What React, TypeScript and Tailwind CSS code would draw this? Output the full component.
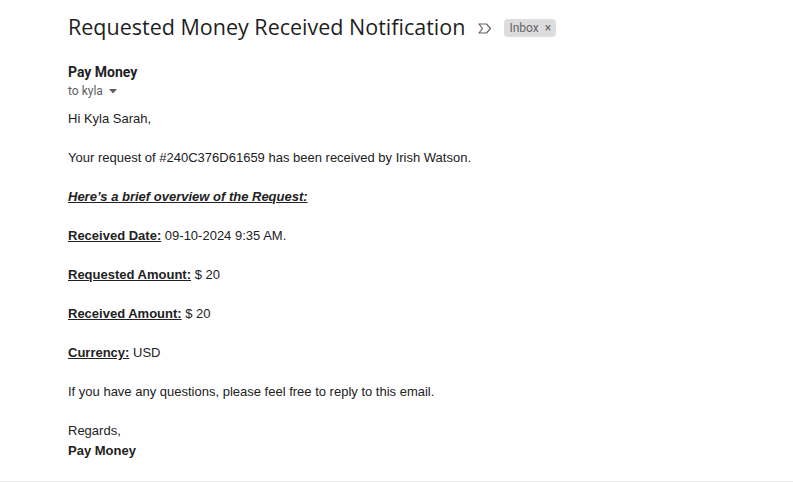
import React from 'react';

const rows = [
  { label: 'Received Date:', value: '09-10-2024 9:35 AM.' },
  { label: 'Requested Amount:', value: '$ 20' },
  { label: 'Received Amount:', value: '$ 20' },
  { label: 'Currency:', value: 'USD' },
];

const ImportantMarker = () => (
  <svg width="14" height="11" viewBox="0 0 14 11" className="block">
    <path
      d="M1 1 H8.5 L12.5 5.5 L8.5 10 H1 L4.5 5.5 Z"
      fill="none"
      stroke="#5f6368"
      strokeWidth="1.2"
      strokeLinejoin="round"
    />
  </svg>
);

const App = () => {
  return (
    <div className="w-[793px] h-[482px] bg-white border-b border-[#e8e8e8] overflow-hidden">
      <div className="pl-[68px] pt-[12px]">
        <div className="flex items-center h-[30px]">
          <h1
            className="text-[21.5px] leading-[30px] text-[#1f1f1f] font-normal"
            style={{ fontFamily: '"Open Sans", Roboto, sans-serif' }}
          >
            Requested Money Received Notification
          </h1>
          <div className="ml-[13px] mt-[2px]">
            <ImportantMarker />
          </div>
          <span
            className="ml-[12px] mt-[2px] flex items-center h-[18px] px-[5px] rounded-[4px] bg-[#dddddd] text-[12px] text-[#666666]"
            style={{ fontFamily: 'Roboto, Arial, sans-serif' }}
          >
            Inbox
            <span className="ml-[6px] text-[12px] text-[#666666]">×</span>
          </span>
        </div>

        <div className="mt-[21px]" style={{ fontFamily: 'Roboto, Arial, sans-serif' }}>
          <div className="text-[14px] leading-[18px] font-bold text-[#1f1f1f]">Pay Money</div>
          <div className="mt-[1px] flex items-center text-[12px] leading-[18px] text-[#5e5e5e]">
            to kyla
            <svg width="8" height="5" viewBox="0 0 8 5" className="ml-[6px]">
              <path d="M0 0 H8 L4 4.5 Z" fill="#5e5e5e" />
            </svg>
          </div>
        </div>

        <div
          className="mt-[9px] text-[13px] leading-[19.5px] text-[#222222]"
          style={{ fontFamily: '"Liberation Sans", Arial, sans-serif' }}
        >
          <p className="mb-[19.5px]">Hi Kyla Sarah,</p>
          <p className="mb-[19.5px]">
            Your request of #240C376D61659 has been received by Irish Watson.
          </p>
          <p className="mb-[19.5px] font-bold italic underline">
            Here’s a brief overview of the Request:
          </p>
          {rows.map((r) => (
            <p key={r.label} className="mb-[19.5px]">
              <span className="font-bold underline">{r.label}</span> {r.value}
            </p>
          ))}
          <p className="mb-[19.5px]">
            If you have any questions, please feel free to reply to this email.
          </p>
          <p>Regards,</p>
          <p className="font-bold">Pay Money</p>
        </div>
      </div>
    </div>
  );
};

export default App;
